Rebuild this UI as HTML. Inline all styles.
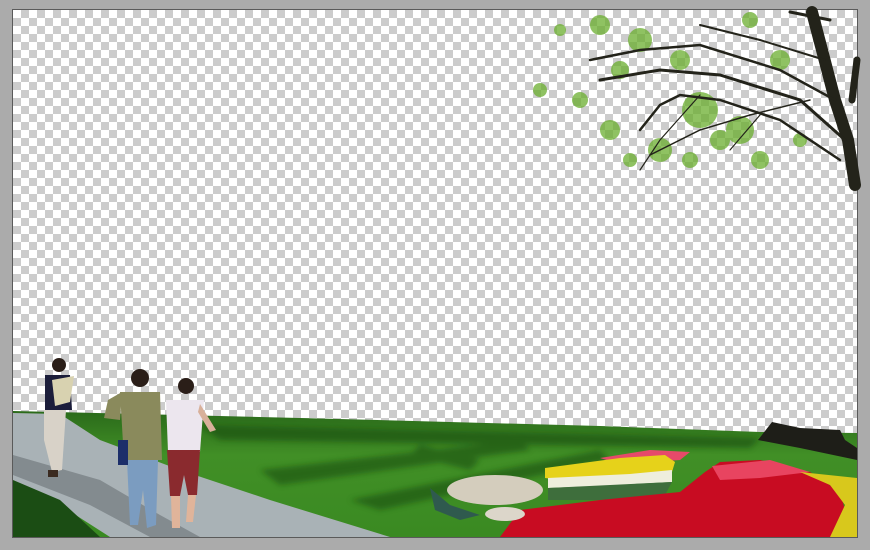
<!DOCTYPE html>
<html><head><meta charset="utf-8"><style>
html,body{margin:0;padding:0;background:#ababab;width:870px;height:550px;overflow:hidden}
svg{display:block}
</style></head><body>
<svg width="870" height="550" viewBox="0 0 870 550" xmlns="http://www.w3.org/2000/svg">
<defs>
<pattern id="ck" x="13" y="10" width="16" height="16" patternUnits="userSpaceOnUse">
<rect width="16" height="16" fill="#fff"/>
<rect x="8" width="8" height="8" fill="#cccccc"/>
<rect y="8" width="8" height="8" fill="#cccccc"/>
</pattern>
<linearGradient id="gr" x1="0" y1="0" x2="0" y2="1">
<stop offset="0" stop-color="#2a6a1a"/><stop offset="0.35" stop-color="#418f26"/><stop offset="1" stop-color="#3a8a22"/>
</linearGradient>
<filter id="bl"><feGaussianBlur stdDeviation="3"/></filter>
</defs>
<rect x="0" y="0" width="870" height="550" fill="#ababab"/>
<rect x="12" y="9" width="846" height="529" fill="#5a5a5a"/>
<rect x="13" y="10" width="844" height="527" fill="url(#ck)"/>
<!-- grass -->
<path d="M13 411 L300 418 L600 426 L760 432 L857 433 L857 537 L13 537 Z" fill="url(#gr)"/>
<g fill="#184a10" opacity="0.55" filter="url(#bl)">
<path d="M200 425 L760 438 L750 448 L220 440 Z"/>
<path d="M260 470 L520 440 L530 450 L280 485 Z"/>
<path d="M350 500 L600 450 L610 460 L380 510 Z"/>
<path d="M420 445 L480 460 L470 470 L410 455 Z"/>
</g>
<!-- path -->
<path d="M13 413 L60 414 L100 440 L180 470 L270 500 L390 537 L110 537 L60 505 L13 485 Z" fill="#a9b2b6"/>
<path d="M13 455 L100 480 L160 515 L200 537 L150 537 L90 505 L13 475 Z" fill="#5d6468" opacity="0.5"/>
<path d="M13 480 L60 500 L100 537 L13 537 Z" fill="#1b4d14"/>
<!-- rock dark -->
<path d="M758 440 L772 422 L800 428 L840 430 L845 440 L857 448 L857 460 L800 448 Z" fill="#1e1e18"/>
<!-- flower beds -->
<path d="M600 458 L650 450 L690 452 L680 460 L620 464 Z" fill="#e64a6a"/>
<path d="M545 468 L590 462 L620 458 L665 455 L675 462 L672 472 L640 476 L560 480 L545 478 Z" fill="#e6d21a"/>
<path d="M548 478 L630 474 L672 470 L672 482 L600 486 L548 488 Z" fill="#eeeedd"/>
<path d="M548 488 L672 482 L665 495 L600 500 L548 500 Z" fill="#3e6e3c"/>
<path d="M500 537 L520 510 L600 500 L680 492 L705 472 L720 462 L760 460 L810 472 L840 492 L845 510 L835 537 Z" fill="#c80c22"/>
<path d="M712 466 L770 460 L810 472 L760 478 L720 480 Z" fill="#e84460"/>
<path d="M800 472 L857 478 L857 537 L830 537 L845 505 L830 485 Z" fill="#d8c81c"/>
<!-- stone -->
<path d="M430 488 L450 505 L480 515 L460 520 L435 510 Z" fill="#2f5a4e"/>
<ellipse cx="495" cy="490" rx="48" ry="15" fill="#d4cdbd"/>
<ellipse cx="505" cy="514" rx="20" ry="7" fill="#dcd6ca"/>
<!-- tree -->
<g fill="#6aae2e" opacity="0.75">
<circle cx="640" cy="40" r="12"/><circle cx="700" cy="110" r="18"/><circle cx="740" cy="130" r="14"/>
<circle cx="610" cy="130" r="10"/><circle cx="580" cy="100" r="8"/><circle cx="540" cy="90" r="7"/>
<circle cx="660" cy="150" r="12"/><circle cx="760" cy="160" r="9"/><circle cx="600" cy="25" r="10"/>
<circle cx="680" cy="60" r="10"/><circle cx="620" cy="70" r="9"/><circle cx="720" cy="140" r="10"/>
<circle cx="780" cy="60" r="10"/><circle cx="560" cy="30" r="6"/><circle cx="630" cy="160" r="7"/>
<circle cx="690" cy="160" r="8"/><circle cx="800" cy="140" r="7"/><circle cx="750" cy="20" r="8"/>
</g>
<g stroke="#23231a" fill="none" stroke-linecap="round">
<path d="M855 185 L848 140 L835 100 L822 50 L812 12" stroke-width="12"/>
<path d="M852 100 L857 60" stroke-width="7"/>
<path d="M845 140 L800 100 L720 75 L660 70 L600 80" stroke-width="3"/>
<path d="M835 100 L780 70 L700 45 L640 50 L590 60" stroke-width="2.5"/>
<path d="M840 160 L780 120 L720 100 L680 95 L660 105 L640 130" stroke-width="2.5"/>
<path d="M825 60 L760 40 L700 25" stroke-width="2"/>
<path d="M830 20 L790 12" stroke-width="3"/>
<path d="M810 100 L750 115 L700 130 L650 155" stroke-width="1.5"/>
<path d="M760 115 L730 150" stroke-width="1.2"/>
<path d="M700 95 L660 140 L640 170" stroke-width="1.2"/>
</g>
<!-- people -->
<g>
<circle cx="59" cy="365" r="7" fill="#2a1e18"/>
<path d="M45 375 L70 375 L72 410 L45 410 Z" fill="#1b1d3a"/>
<path d="M52 380 L74 376 L70 402 L55 406 Z" fill="#d8d2b0"/>
<path d="M44 410 L66 410 L62 470 L52 472 L44 440 Z" fill="#d8d2c8"/>
<path d="M48 470 L58 470 L58 477 L48 477 Z" fill="#3a2a20"/>
<circle cx="140" cy="378" r="9" fill="#2a1e18"/>
<path d="M120 392 L160 392 L162 460 L124 460 Z" fill="#8a8a5c"/>
<path d="M108 400 L122 392 L120 420 L104 418 Z" fill="#8a8a5c"/>
<path d="M127 460 L158 460 L156 525 L147 528 L143 490 L138 525 L130 525 Z" fill="#7b9cc0"/>
<path d="M118 440 L128 440 L128 465 L118 465 Z" fill="#1c2e6a"/>
<circle cx="186" cy="386" r="8" fill="#2a1e18"/>
<path d="M166 400 L204 400 L200 452 L168 452 Z" fill="#ece6ee"/>
<path d="M200 404 L216 430 L210 432 L198 412 Z" fill="#d8b09a"/>
<path d="M167 450 L200 450 L197 495 L188 495 L184 475 L180 496 L170 496 Z" fill="#8a2a2e"/>
<path d="M171 496 L180 496 L180 528 L172 528 Z" fill="#e0b49a"/>
<path d="M188 495 L196 495 L193 522 L186 522 Z" fill="#e0b49a"/>
</g>
</svg>
</body></html>
